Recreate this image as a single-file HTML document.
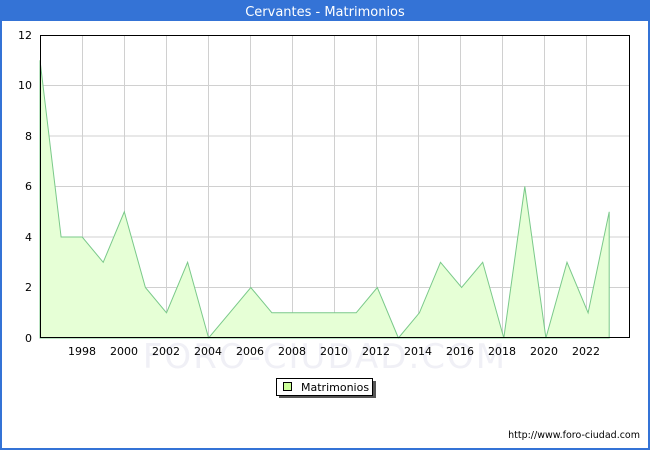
<!DOCTYPE html><html><head><style>body{margin:0;width:650px;height:450px;overflow:hidden;font-family:"DejaVu Sans","Liberation Sans",sans-serif}</style></head><body>
<svg width="650" height="450" xmlns="http://www.w3.org/2000/svg" font-family="DejaVu Sans, Liberation Sans, sans-serif">
<rect x="0" y="0" width="650" height="450" fill="#fff"/>
<rect x="1" y="1" width="648" height="448" fill="none" stroke="#3473d6" stroke-width="2"/>
<rect x="0" y="0" width="650" height="21" fill="#3473d6"/>
<text x="325" y="16" fill="#fff" font-size="13" text-anchor="middle">Cervantes - Matrimonios</text>
<g stroke="#d0d0d0" stroke-width="1">
<line x1="40" x2="630" y1="287.5" y2="287.5"/><line x1="40" x2="630" y1="237" y2="237"/><line x1="40" x2="630" y1="186.5" y2="186.5"/><line x1="40" x2="630" y1="136" y2="136"/><line x1="40" x2="630" y1="85.5" y2="85.5"/>
<line x1="82.5" x2="82.5" y1="35" y2="338"/><line x1="124.5" x2="124.5" y1="35" y2="338"/><line x1="166.5" x2="166.5" y1="35" y2="338"/><line x1="208.5" x2="208.5" y1="35" y2="338"/><line x1="250.5" x2="250.5" y1="35" y2="338"/><line x1="292.5" x2="292.5" y1="35" y2="338"/><line x1="334.5" x2="334.5" y1="35" y2="338"/><line x1="376.5" x2="376.5" y1="35" y2="338"/><line x1="418.5" x2="418.5" y1="35" y2="338"/><line x1="460.5" x2="460.5" y1="35" y2="338"/><line x1="502.5" x2="502.5" y1="35" y2="338"/><line x1="544.5" x2="544.5" y1="35" y2="338"/><line x1="586.5" x2="586.5" y1="35" y2="338"/>
</g>
<text x="325" y="368" font-size="34" fill="#f0f0f6" text-anchor="middle" letter-spacing="2">FORO-CIUDAD.COM</text>
<polygon fill="#e6ffd6" stroke="#7ac98a" stroke-width="1" points="40,338 40,60.3 61.1,237 82.2,237 103.2,262.3 124.3,211.8 145.4,287.5 166.5,312.8 187.6,262.3 208.6,338 229.7,312.8 250.8,287.5 271.9,312.8 293,312.8 314,312.8 335.1,312.8 356.2,312.8 377.3,287.5 398.4,338 419.4,312.8 440.5,262.3 461.6,287.5 482.7,262.3 503.8,338 524.8,186.5 545.9,338 567,262.3 588.1,312.8 609.2,211.8 609.2,338"/>
<rect x="40.5" y="35.5" width="589" height="302" fill="none" stroke="#000"/>
<g font-size="11" fill="#000" text-anchor="end">
<text x="32" y="342">0</text><text x="32" y="291">2</text><text x="32" y="241">4</text><text x="32" y="190">6</text><text x="32" y="140">8</text><text x="32" y="89">10</text><text x="32" y="39">12</text>
</g>
<g font-size="11" fill="#000" text-anchor="middle">
<text x="82" y="355">1998</text><text x="124" y="355">2000</text><text x="166" y="355">2002</text><text x="208" y="355">2004</text><text x="250" y="355">2006</text><text x="292" y="355">2008</text><text x="334" y="355">2010</text><text x="376" y="355">2012</text><text x="418" y="355">2014</text><text x="460" y="355">2016</text><text x="502" y="355">2018</text><text x="544" y="355">2020</text><text x="586" y="355">2022</text>
</g>
<rect x="279" y="381" width="97" height="17" fill="#555"/>
<rect x="276.5" y="378.5" width="96" height="17" fill="#fff" stroke="#000"/>
<rect x="283.5" y="382.5" width="8" height="8" fill="#ccff99" stroke="#000"/>
<text x="301" y="391" font-size="11">Matrimonios</text>
<text x="640" y="438" font-size="9.5" text-anchor="end">http://www.foro-ciudad.com</text>
</svg>
</body></html>
